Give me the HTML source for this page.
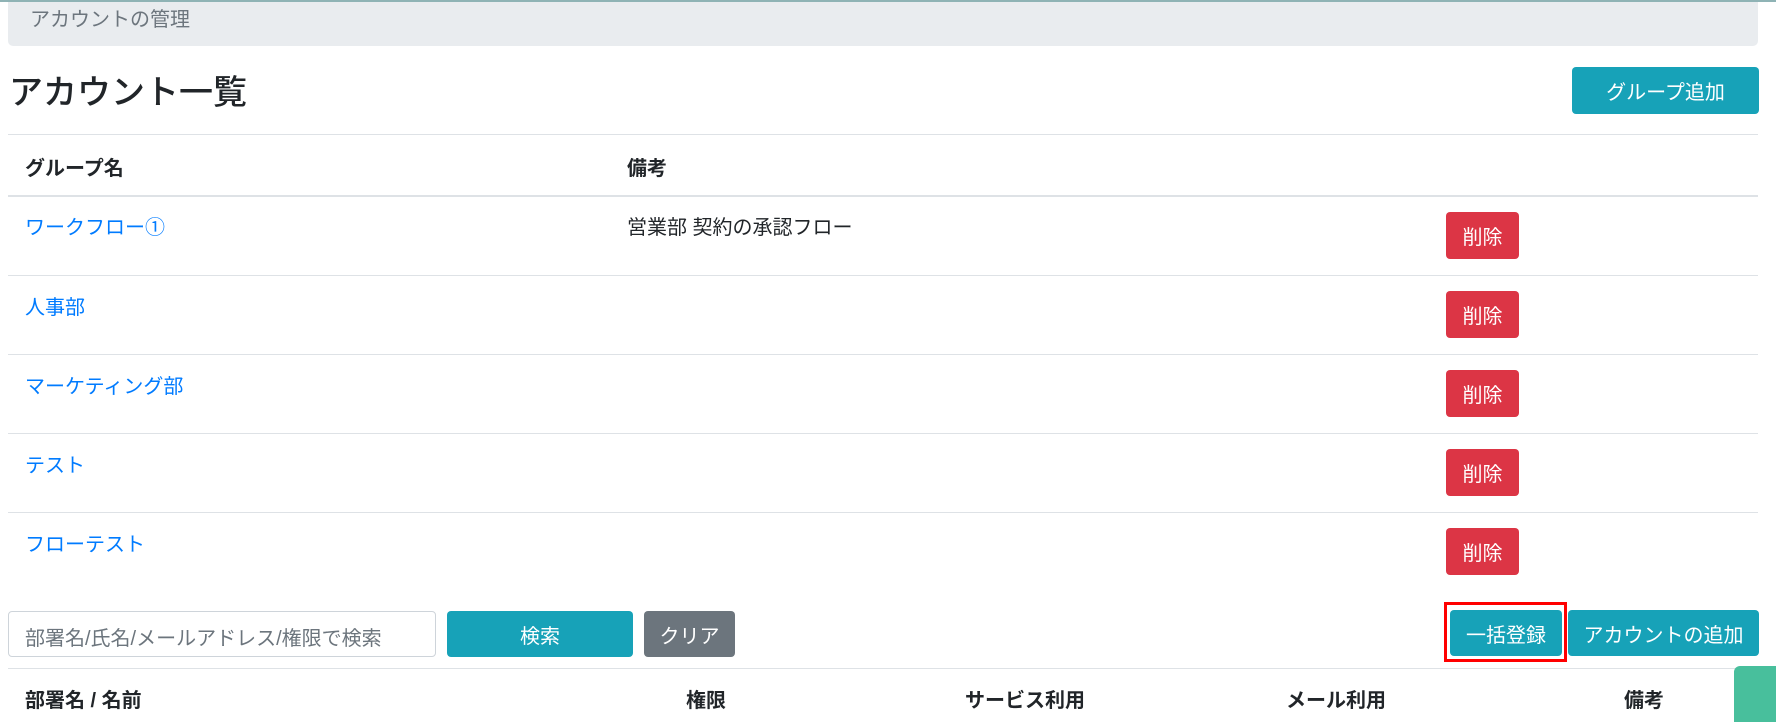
<!DOCTYPE html>
<html><head><meta charset="utf-8"><style>
*{box-sizing:border-box;margin:0;padding:0}
body{width:1776px;height:720px;overflow:hidden;background:#fff;font-family:"Liberation Sans","Noto Sans CJK JP",sans-serif;color:#212529;font-size:20px;position:relative;border-top:2px solid #8fb3b5}
.a{position:absolute}
.bc{left:8px;top:0;width:1750px;height:44px;background:#e9ecef;border-radius:0 0 5px 5px;color:#6c757d;padding:1px 0 0 22px;font-size:20px}
h1{position:absolute;left:9px;top:63px;font-size:34px;font-weight:500}
.btn{position:absolute;color:#fff;border-radius:4px;display:flex;align-items:center;justify-content:center;font-size:20px}
.info{background:#17a2b8}
.del{background:#dc3545;left:1446px;width:73px;height:47px}
.line{position:absolute;left:8px;width:1750px;height:1px;background:#dee2e6}
.lk{position:absolute;left:25px;color:#007bff}
.th{position:absolute;font-weight:bold}
</style></head><body>
<div class="a bc">アカウントの管理</div>
<h1>アカウント一覧</h1>
<div class="btn info" style="left:1572px;top:65px;width:187px;height:47px">グループ追加</div>
<div class="line" style="top:132px"></div>
<div class="th" style="left:25px;top:150px">グループ名</div>
<div class="th" style="left:627px;top:150px">備考</div>
<div class="line" style="top:193px;height:2px"></div>
<div class="lk" style="top:209px">ワークフロー①</div>
<div class="a" style="left:627px;top:209px">営業部 契約の承認フロー</div>
<div class="btn del" style="top:210px">削除</div>
<div class="line" style="top:273px"></div>
<div class="lk" style="top:289px">人事部</div>
<div class="btn del" style="top:289px">削除</div>
<div class="line" style="top:352px"></div>
<div class="lk" style="top:368px">マーケティング部</div>
<div class="btn del" style="top:368px">削除</div>
<div class="line" style="top:431px"></div>
<div class="lk" style="top:447px">テスト</div>
<div class="btn del" style="top:447px">削除</div>
<div class="line" style="top:510px"></div>
<div class="lk" style="top:526px">フローテスト</div>
<div class="btn del" style="top:526px">削除</div>
<div class="a" style="left:8px;top:609px;width:428px;height:46px;border:1px solid #ced4da;border-radius:4px;color:#6c757d;padding:10px 0 0 16px">部署名/氏名/メールアドレス/権限で検索</div>
<div class="btn info" style="left:447px;top:609px;width:186px;height:46px">検索</div>
<div class="btn" style="left:644px;top:609px;width:91px;height:46px;background:#6c757d">クリア</div>
<div class="a" style="left:1444px;top:600px;width:123px;height:60px;border:3px solid #f00"></div>
<div class="btn info" style="left:1450px;top:608px;width:112px;height:46px">一括登録</div>
<div class="btn info" style="left:1568px;top:608px;width:191px;height:46px">アカウントの追加</div>
<div class="line" style="top:666px"></div>
<div class="th" style="left:25px;top:682px">部署名 / 名前</div>
<div class="th" style="left:686px;top:682px">権限</div>
<div class="th" style="left:965px;top:682px">サービス利用</div>
<div class="th" style="left:1286px;top:682px">メール利用</div>
<div class="th" style="left:1624px;top:682px">備考</div>
<div class="a" style="left:1734px;top:664px;width:42px;height:56px;background:#48bf9c;border-radius:6px 0 0 0"></div>
</body></html>
